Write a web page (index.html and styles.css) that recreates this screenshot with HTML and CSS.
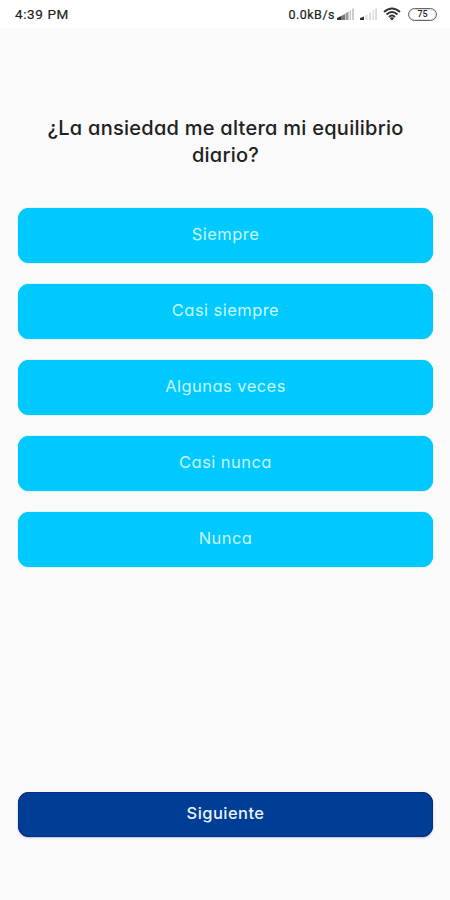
FILE: index.html
```html
<!DOCTYPE html>
<html lang="es">
<head>
<meta charset="utf-8">
<meta name="viewport" content="width=device-width, initial-scale=1">
<title>Cuestionario</title>
<link rel="stylesheet" href="styles.css">
</head>
<body>
<div class="screen">
  <header class="status">
    <span class="time">4:39 PM</span>
    <div class="indicators">
      <span class="speed">0.0kB/s</span>
      <svg class="signal" width="18" height="12" viewBox="0 0 18 12"><path fill="#333" d="M0 12V10L4 8V12Z"/><path fill="#777" d="M4 8 8 6V12H4Z"/><path fill="#999" d="M8.500 5.500 11.500 3.500V12H8.500Z"/><path fill="#ccc" d="M12.500 2.500 14 1.500V12H12.500ZM15 1 17 0V12H15Z"/></svg>
      <svg class="signal second" width="18" height="12" viewBox="0 0 18 12"><path fill="#333" d="M0 12V10L4 8.500V12Z"/><path fill="#ddd" d="M5.500 7.500 7.500 6.500V12H5.500ZM9 5 11 4V12H9ZM12.500 2.500 14 1.500V12H12.500ZM15 1 17 0V12H15Z"/></svg>
      <svg class="wifi" width="18" height="14" viewBox="0 0 18 14" fill="none" stroke="#333" stroke-width="1.800"><path d="M1 5Q9-2 17 5M3.500 7.500Q9 2.500 14.500 7.500M6 10Q9 7 12 10"/><path fill="#333" stroke="none" d="M6.800 11.200Q9 9.200 11.200 11.200L9 13.600Z"/></svg>
      <span class="battery">75</span>
    </div>
  </header>
  <main class="quiz">
    <h1 class="question"><span class="line-one">¿La ansiedad me altera mi equilibrio</span> <span class="line-two">diario?</span></h1>
    <div class="options">
      <button class="option">Siempre</button>
      <button class="option">Casi siempre</button>
      <button class="option">Algunas veces</button>
      <button class="option">Casi nunca</button>
      <button class="option">Nunca</button>
    </div>
    <button class="next">Siguiente</button>
  </main>
</div>
</body>
</html>
```
FILE: styles.css
```css
* { box-sizing: border-box; }
body { margin: 0; font-family: Inter, "Open Sans", sans-serif; }
.screen { display: flex; flex-direction: column; width: 450px; height: 900px; background: #fafafa; overflow: hidden; }
.status { display: flex; justify-content: space-between; height: 28px; padding: 0 13px 0 15px; background: #fff; color: #222; font: 400 13.500px/29px Roboto, sans-serif; }
.time { letter-spacing: .6px; -webkit-text-stroke: .2px #222; }
.indicators { display: flex; align-items: center; height: 28px; }
.speed { font-size: 12.500px; letter-spacing: .5px; -webkit-text-stroke: .2px #222; }
.signal { margin: 0 0 1px 2px; }
.second { margin-left: 5px; }
.wifi { margin: 0 7px 0 5px; }
.battery { width: 29px; height: 13px; border: 1.500px solid #666; border-radius: 7px; box-shadow: inset 0 0 0 1px #ddd; font-size: 9px; font-weight: 500; line-height: 11px; text-align: center; }
.quiz { display: flex; flex: 1; flex-direction: column; padding: 87px 17px 63px 18px; }
.question { display: flex; flex-direction: column; align-items: center; margin: 0; color: #202020; font-size: 20px; font-weight: 500; line-height: 27px; font-feature-settings: "cv11"; letter-spacing: .26px; white-space: nowrap; }
.options { display: grid; grid-auto-rows: 55px; gap: 21px; margin-top: 39px; }
.option, .next { border: 0; border-radius: 11px; font-family: inherit; font-size: 16.500px; font-feature-settings: "cv11"; letter-spacing: .45px; }
.option { padding: 0 0 4px; background: #00c9ff; color: #c8f7ff; box-shadow: 0 0 1px #00b9dc; }
.next { height: 45px; margin-top: auto; padding: 0 0 3px; background: #003d94; color: #e9f3ff; font-weight: 500; box-shadow: inset 0 0 0 1px #003085, 0 1px 2px #b9b9e8; }
```
